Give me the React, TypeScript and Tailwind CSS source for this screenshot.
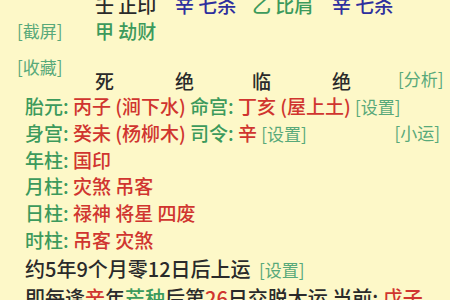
const green = 'text-[#3c9a5c]'
const red = 'text-[#d0352f]'
const blue = 'text-[#2e2f9e]'
const link = 'text-[17px] font-normal text-[#58a97a]'

function Label({ children }: { children: string }) {
  return <span className={green}>{children}: </span>
}

export default function App() {
  return (
    <div
      className="h-[300px] w-[450px] overflow-hidden bg-[#fdf8c8] text-[19px] font-medium leading-[26px] text-[#2a2a2a]"
      style={{ fontFamily: '"Noto Sans CJK SC", "Noto Sans", sans-serif' }}
    >
      <div className="flex">
        <div className="w-[95px] shrink-0 pl-[17px]">
          <div className={`mt-[18px] ${link}`}>[截屏]</div>
          <div className={`mt-[10px] ${link}`}>[收藏]</div>
        </div>
        <div className="-mt-[8px] grid flex-1 grid-cols-[80px_77px_80px_66px_1fr]">
          <span>壬 正印</span>
          <span className={blue}>辛 七杀</span>
          <span className={green}>乙 比肩</span>
          <span className={blue}>辛 七杀</span>
          <span />
          <span className={green}>甲 劫财</span>
          <span />
          <span />
          <span />
          <span />
          <span className="mt-[24px]">死</span>
          <span className="mt-[24px]">绝</span>
          <span className="mt-[24px]">临</span>
          <span className="mt-[24px]">绝</span>
          <span className={`mt-[22px] ${link}`}>[分析]</span>
        </div>
      </div>

      <div className="mt-[-1px] pl-[25px] pr-[10px]">
        <div>
          <Label>胎元</Label>
          <span className={red}>丙子 (涧下水) </span>
          <Label>命宫</Label>
          <span className={red}>丁亥 (屋上土) </span>
          <span className={link}>[设置]</span>
        </div>
        <div className="flex justify-between">
          <div>
            <Label>身宫</Label>
            <span className={red}>癸未 (杨柳木) </span>
            <Label>司令</Label>
            <span className={red}>辛 </span>
            <span className={link}>[设置]</span>
          </div>
          <span className={link}>[小运]</span>
        </div>
        <div>
          <Label>年柱</Label>
          <span className={red}>国印</span>
        </div>
        <div>
          <Label>月柱</Label>
          <span className={red}>灾煞 吊客</span>
        </div>
        <div className="mt-[1px]">
          <Label>日柱</Label>
          <span className={red}>禄神 将星 四废</span>
        </div>
        <div className="mt-[1px]">
          <Label>时柱</Label>
          <span className={red}>吊客 灾煞</span>
        </div>
        <div className="mt-[2px] text-[20px] leading-[28px]">
          约5年9个月零12日后上运 <span className={`ml-[4px] ${link}`}>[设置]</span>
        </div>
        <div className="text-[20px] leading-[28px]">
          即每逢<span className={red}>辛</span>年<span className={green}>芒种</span>后第
          <span className={red}>26</span>日交脱大运 当前: <span className={red}>戊子</span>
        </div>
      </div>
    </div>
  )
}
